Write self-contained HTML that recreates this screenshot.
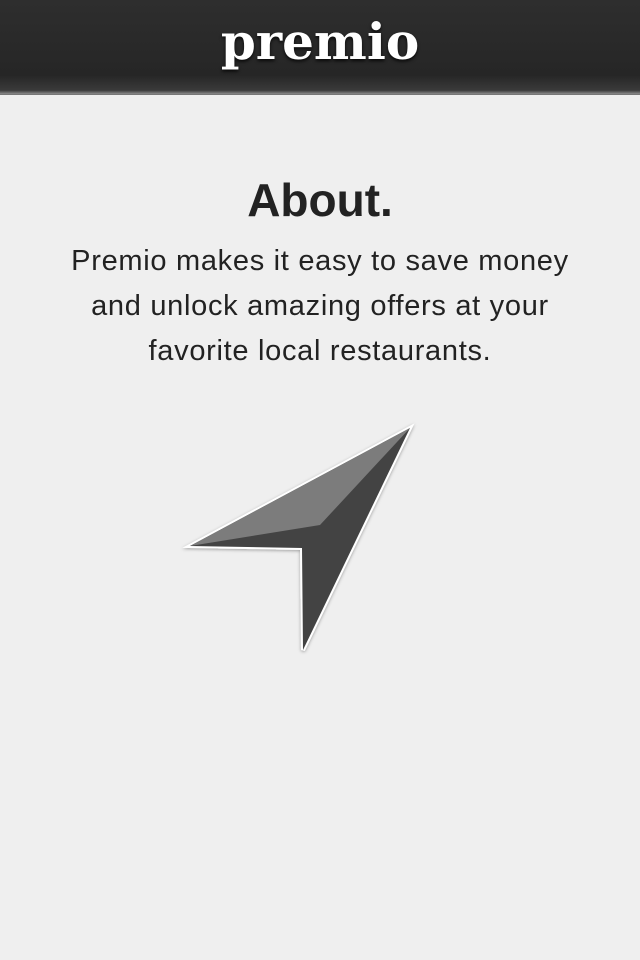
<!DOCTYPE html>
<html><head><meta charset="utf-8"><style>
html,body{margin:0;padding:0}
body{width:640px;height:960px;overflow:hidden;background:#efefef;position:relative;font-family:"Liberation Sans",sans-serif}
.hdr{position:absolute;left:0;top:0;width:640px;height:94px;background:linear-gradient(#2e2e2e,#262626 80%,#3a3a3a 96%,#8a8a8a);border-bottom:1px solid #777}
.logo{position:absolute;left:0;width:640px;top:12px;text-align:center;font-family:"DejaVu Serif",serif;font-weight:bold;font-size:50px;color:#fff;letter-spacing:0px;text-shadow:0 2px 3px rgba(0,0,0,.8)}
h1{position:absolute;top:173px;left:0;width:640px;margin:0;text-align:center;font-size:46px;font-weight:bold;color:#222}
p{position:absolute;top:239px;left:0;width:640px;margin:0;text-align:center;font-size:29px;line-height:45px;color:#222;letter-spacing:.7px}
</style></head><body>
<div class="hdr"><div class="logo">premio</div></div>
<h1>About.</h1>
<p>Premio makes it easy to save money<br>and unlock amazing offers at your<br>favorite local restaurants.</p>
<svg style="position:absolute;left:0;top:0" width="640" height="960">
<defs><filter id="s"><feDropShadow dx="0" dy="1" stdDeviation="1.5" flood-color="#000" flood-opacity=".35"/></filter></defs>
<polygon points="410,428 190,546 302,548 303,650" fill="#fff" stroke="#fff" stroke-width="4" stroke-linejoin="miter" filter="url(#s)"/>
<polygon points="410,428 190,546 302,548 303,650" fill="#434343"/>
<polygon points="410,428 190,546 320,525" fill="#7c7c7c"/>
</svg>
</body></html>
